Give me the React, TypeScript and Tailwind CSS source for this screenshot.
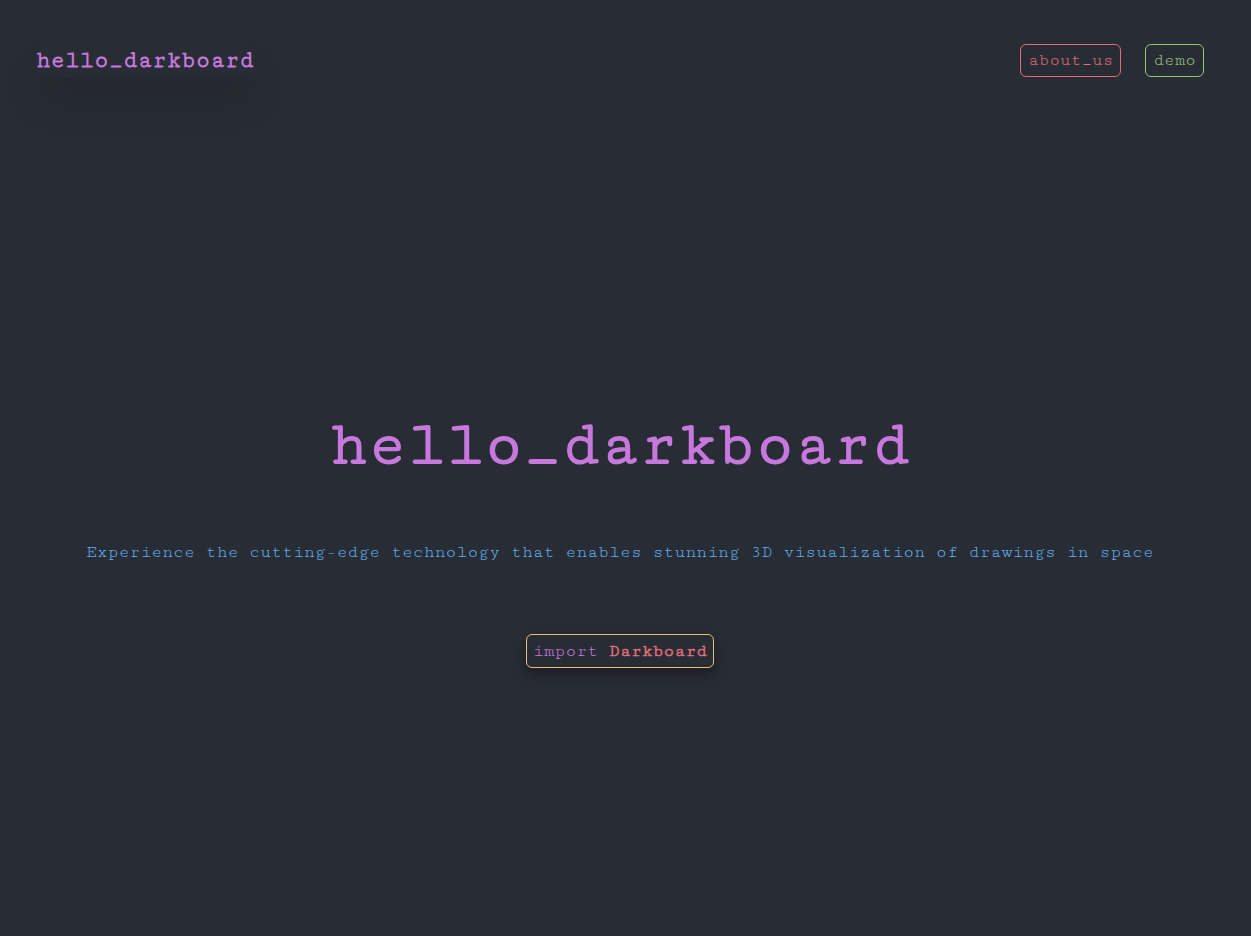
import React from 'react';

const mono = "font-['Cutive_Mono','Courier_Prime','Liberation_Mono',monospace]";

const NavLink: React.FC<{ label: string; tone: 'red' | 'green' }> = ({ label, tone }) => (
  <a
    href="#"
    className={`block rounded-md border px-[7px] py-1 text-[17.6px] leading-[23px] ${
      tone === 'red' ? 'border-[#e06c75] text-[#e06c75]' : 'border-[#98c379] text-[#98c379]'
    }`}
  >
    {label}
  </a>
);

const App: React.FC = () => {
  return (
    <div className={`min-h-screen bg-[#282c34] ${mono}`}>
      <div className="w-[1240px]">
        {/* header */}
        <header className="flex h-[121px] items-center justify-between pl-9 pr-9">
          <span className="inline-block rounded-xl text-2xl font-bold text-[#c678dd] shadow-[0_25px_35px_4px_rgba(0,0,0,0.1)]">
            hello_darkboard
          </span>
          <nav className="flex items-center gap-6">
            <NavLink label="about_us" tone="red" />
            <NavLink label="demo" tone="green" />
          </nav>
        </header>

        {/* hero */}
        <main className="flex flex-col items-center pt-[292px]">
          <h1 className="text-[64px] font-bold leading-none text-[#c678dd]">hello_darkboard</h1>
          <p className="mt-[63px] text-lg leading-6 text-[#61afef]">
            Experience the cutting-edge technology that enables stunning 3D visualization of drawings in space
          </p>
          <button className="mt-[70px] rounded-md border border-[#e5c07b] px-[6px] py-1 text-lg leading-6 shadow-[0_6px_14px_rgba(0,0,0,0.35)]">
            <span className="text-[#c678dd]">import </span>
            <span className="font-bold text-[#e06c75]">Darkboard</span>
          </button>
        </main>
      </div>
    </div>
  );
};

export default App;
